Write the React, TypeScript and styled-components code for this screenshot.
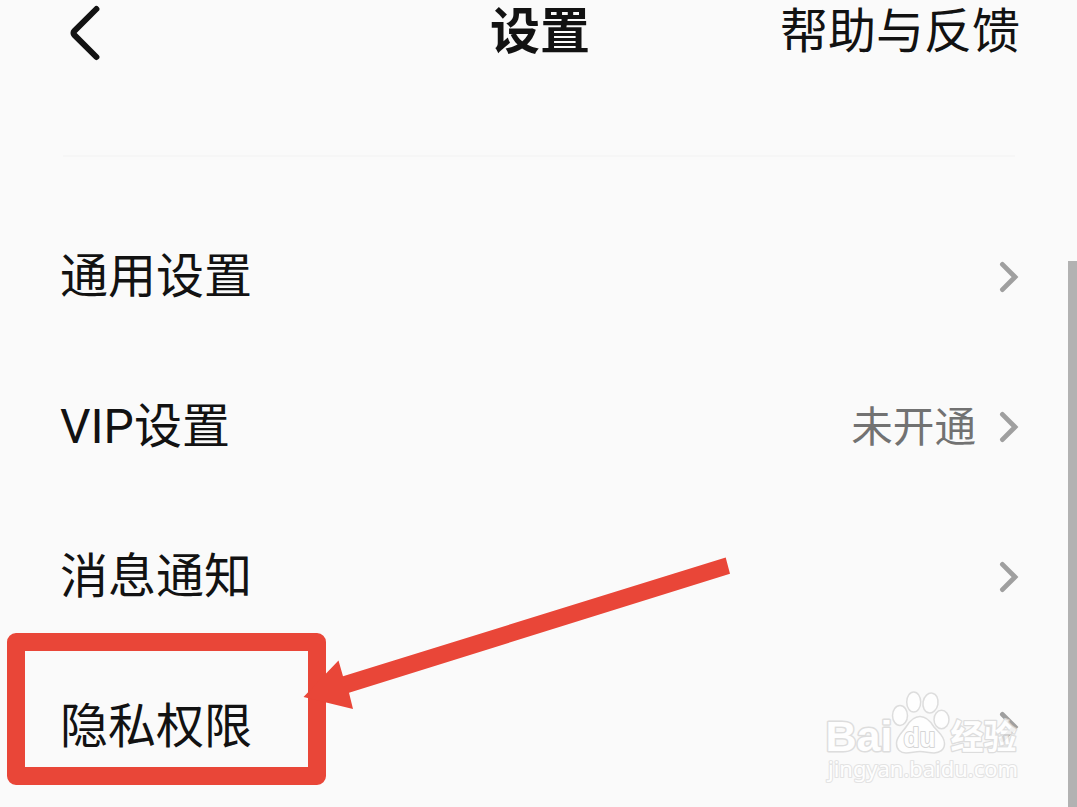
import React from 'react';
import styled, { createGlobalStyle } from 'styled-components';

const GlobalStyle = createGlobalStyle`
  * {
    box-sizing: border-box;
  }
  body {
    margin: 0;
    background-color: #fafafa;
  }
`;

const Screen = styled.div`
  position: relative;
  display: flex;
  width: 1077px;
  height: 807px;
  overflow: hidden;
  background-color: #fafafa;
  color: #121212;
  font-family: Roboto, 'Noto Sans CJK SC', sans-serif;
`;

const Content = styled.div`
  flex: 1;
  padding-left: 60px;
`;

const Header = styled.header`
  display: grid;
  grid-template-columns: 1fr auto 1fr;
  align-items: center;
  width: 960px;
  height: 64px;
`;

const BackButton = styled.button`
  display: flex;
  padding: 2px 0 0 8px;
  background: none;
  border: none;
  cursor: pointer;
`;

const Title = styled.h1`
  margin: 0;
  font-size: 50px;
  font-weight: 700;
  line-height: 64px;
`;

const HelpLink = styled.span`
  justify-self: end;
  font-size: 48px;
  line-height: 64px;
  white-space: nowrap;
`;

const Divider = styled.div`
  width: 952px;
  height: 2px;
  margin: 91px 0 45px 3px;
  background-color: #f6f6f6;
`;

const List = styled.ul`
  margin: 0;
  padding: 0;
  list-style: none;
`;

const Row = styled.li`
  display: flex;
  align-items: center;
  width: 959px;
  height: 150px;
`;

const Label = styled.span`
  flex: 1;
  font-size: 48px;
  line-height: 64px;
`;

const Value = styled.span`
  margin-right: 23px;
  padding-top: 2px;
  color: #727272;
  font-size: 41.6px;
  line-height: 60px;
`;

const ScrollTrack = styled.div`
  display: flex;
  align-items: flex-end;
  width: 9px;
`;

const ScrollThumb = styled.div`
  width: 9px;
  height: 546px;
  background-color: #b2b2b2;
`;

const Highlight = styled.div`
  position: absolute;
  left: 7px;
  top: 632.5px;
  width: 319px;
  height: 152px;
  border: 18px solid #e94638;
  border-radius: 9px;
`;

const Overlay = styled.svg`
  position: absolute;
  left: 0;
  top: 0;
  pointer-events: none;
`;

const BackIcon = () => (
  <svg width="34" height="58" viewBox="0 0 34 58" fill="none">
    <path
      d="M28.4 5L6.2 27.2a2.6 2.6 0 0 0 0 3.6L28.4 53"
      stroke="#121212"
      strokeWidth="6"
      strokeLinecap="round"
      strokeLinejoin="round"
    />
  </svg>
);

const ChevronIcon = () => (
  <svg width="20" height="32" viewBox="0 0 20 32" fill="none">
    <path
      d="M3.4 3.4L16 16L3.4 28.6"
      stroke="#9f9f9f"
      strokeWidth="4.8"
      strokeLinecap="round"
      strokeLinejoin="miter"
    />
  </svg>
);

const Arrow = () => (
  <Overlay width="1077" height="807">
    <polygon
      points="725.7,557.5 730,573.8 349,692.7 353,709 303.5,697 338.5,660.5 343,676.3"
      fill="#e94638"
    />
  </Overlay>
);

const Watermark = () => (
  <Overlay width="1077" height="807" opacity="0.85">
    <g
      fill="#fff"
      stroke="#d9d9d9"
      strokeWidth="1.5"
      strokeLinejoin="round"
    >
      <text
        x="825.5"
        y="751"
        fontSize="43"
        fontWeight="700"
        fontFamily="'Liberation Sans', sans-serif"
        textLength="67"
        lengthAdjust="spacingAndGlyphs"
        strokeWidth="3"
        paintOrder="stroke"
      >
        Bai
      </text>
      <ellipse cx="900" cy="715.5" rx="7.5" ry="10" />
      <ellipse cx="913.7" cy="702" rx="7" ry="10" />
      <ellipse cx="930.5" cy="703" rx="7.5" ry="10" transform="rotate(10 930.5 703)" />
      <ellipse cx="941.5" cy="719.5" rx="7.5" ry="9.3" />
      <path d="M920 716.5C927 716.5 931 722 934 727C938 732 944.5 736 944.5 743.5C944.5 750 939.5 753 934 753C929 753 925 751.5 920 751.5C915 751.5 911 753 906 753C900.5 753 896.5 749.5 896.5 743.5C896.5 736 903 732 906 727C909 722 913 716.5 920 716.5Z" />
      <text
        x="903.5"
        y="746.5"
        fontSize="27"
        fontWeight="700"
        fontFamily="'Liberation Sans', sans-serif"
        stroke="#cfcfcf"
        strokeWidth="2"
        paintOrder="stroke"
        textLength="32"
        lengthAdjust="spacingAndGlyphs"
      >
        du
      </text>
      <text
        x="950.5"
        y="749"
        fontSize="34"
        fontWeight="700"
        fontFamily="'Noto Sans CJK SC', sans-serif"
        textLength="66"
        lengthAdjust="spacingAndGlyphs"
        strokeWidth="2.6"
        paintOrder="stroke"
      >
        经验
      </text>
      <text
        x="828"
        y="777"
        fontSize="22"
        fontFamily="'Noto Sans', sans-serif"
        textLength="190"
        lengthAdjust="spacingAndGlyphs"
        stroke="#e0e0e0"
        strokeWidth="2.2"
        paintOrder="stroke"
      >
        jingyan.baidu.com
      </text>
    </g>
  </Overlay>
);

const items = [
  { label: '通用设置' },
  { label: 'VIP设置', value: '未开通' },
  { label: '消息通知' },
  { label: '隐私权限' },
];

const App = () => {
  return (
    <Screen>
      <GlobalStyle />
      <Content>
        <Header>
          <BackButton aria-label="返回">
            <BackIcon />
          </BackButton>
          <Title>设置</Title>
          <HelpLink>帮助与反馈</HelpLink>
        </Header>
        <Divider />
        <List>
          {items.map(item => (
            <Row key={item.label}>
              <Label>{item.label}</Label>
              {item.value && <Value>{item.value}</Value>}
              <ChevronIcon />
            </Row>
          ))}
        </List>
      </Content>
      <ScrollTrack>
        <ScrollThumb />
      </ScrollTrack>
      <Highlight />
      <Arrow />
      <Watermark />
    </Screen>
  );
};

export default App;
